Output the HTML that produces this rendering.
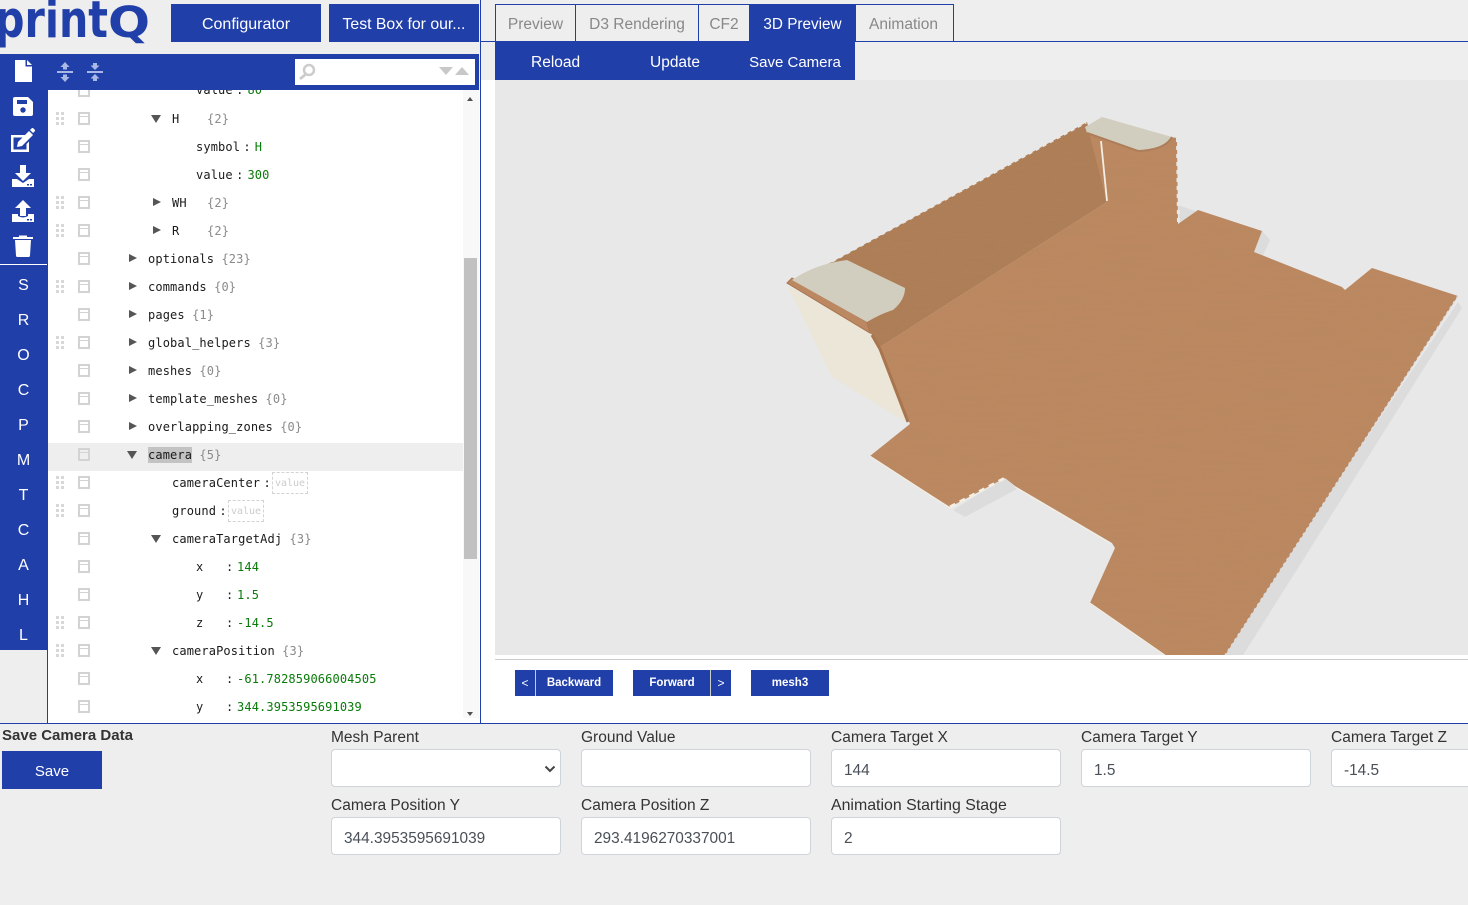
<!DOCTYPE html>
<html><head><meta charset="utf-8"><title>printQ</title>
<style>
html,body{margin:0;padding:0;width:1468px;height:905px;overflow:hidden;background:#eee}
body{position:relative;font-family:"Liberation Sans",sans-serif;color:#333}
div,span,svg{box-sizing:border-box}
.b{position:absolute;background:#213fa9;color:#fff;text-align:center;font-size:15.5px;white-space:nowrap}
.tab{position:absolute;top:4px;height:37px;line-height:40px;text-align:center;font-size:15.500px;color:#888;border:1px solid #213fa9;border-bottom:0}
.t{position:absolute;font:12px/16px "DejaVu Sans Mono",monospace;letter-spacing:.12px;color:#1a1a1a;white-space:pre}
.g{color:#8a8a8a}.v{color:#0a7a0a}
.c{position:relative;left:-4px}
.ck{position:absolute;left:78px;width:12px;height:13px;border:2px solid #d3d3d3}
.ck:after{content:"";position:absolute;left:0;right:0;top:2px;height:1px;background:#d3d3d3}
.dr{position:absolute;left:56px;width:8px;height:13px;background:
linear-gradient(#d8d8d8,#d8d8d8) 0 0/3px 3px no-repeat,
linear-gradient(#d8d8d8,#d8d8d8) 5px 0/3px 3px no-repeat,
linear-gradient(#d8d8d8,#d8d8d8) 0 5px/3px 3px no-repeat,
linear-gradient(#d8d8d8,#d8d8d8) 5px 5px/3px 3px no-repeat,
linear-gradient(#d8d8d8,#d8d8d8) 0 10px/3px 3px no-repeat,
linear-gradient(#d8d8d8,#d8d8d8) 5px 10px/3px 3px no-repeat}
.ar{position:absolute;width:0;height:0}
.ard{border-left:5px solid transparent;border-right:5px solid transparent;border-top:8px solid #555}
.arr{border-top:4.500px solid transparent;border-bottom:4.500px solid transparent;border-left:8px solid #555}
.side{position:absolute;left:0;width:47px;text-align:center;color:#fff;font-size:16px;line-height:20px}
.lbl{position:absolute;font-size:15.500px;line-height:20px;color:#333;white-space:nowrap}
.inp{position:absolute;width:230px;height:38px;background:#fff;border:1px solid #ced4da;border-radius:4px;font-size:15.400px;line-height:41px;padding-left:12px;color:#495057}
.vb{position:absolute;height:22px;width:36px;border:1px dashed #d3d3d3;font:10px/21px "DejaVu Sans Mono",monospace;color:#ccc;text-align:center}
.sb{position:absolute;top:670px;height:26px;background:#213fa9;color:#fff;font:bold 11.500px/27px "Liberation Sans",sans-serif;text-align:center}
</style></head><body>

<!-- logo -->
<svg style="position:absolute;left:0;top:0" width="165" height="54" fill="#213fa9" font-family="DejaVu Sans" font-weight="bold"><text x="-5" y="37" font-size="51" textLength="113" lengthAdjust="spacingAndGlyphs">print</text><text x="108" y="37" font-size="43" textLength="42" lengthAdjust="spacingAndGlyphs">Q</text></svg>

<div class="b" style="left:171px;top:4px;width:150px;height:38px;line-height:41px;font-size:16px">Configurator</div>
<div class="b" style="left:329px;top:4px;width:150px;height:38px;line-height:41px;font-size:15.800px">Test Box for our...</div>

<!-- left panel -->
<div style="position:absolute;left:0;top:54px;width:479px;height:36px;background:#213fa9"></div>
<div style="position:absolute;left:0;top:54px;width:48px;height:596px;background:#213fa9"></div>
<div style="position:absolute;left:0;top:264px;width:47px;height:1px;background:#fff"></div>
<div style="position:absolute;left:47px;top:650px;width:1px;height:73px;background:#213fa9"></div>
<div style="position:absolute;left:48px;top:90px;width:432px;height:633px;background:#fff;overflow:hidden"></div>
<div style="position:absolute;left:480px;top:0;width:1px;height:724px;background:#213fa9"></div>

<!-- toolbar icons -->
<svg style="position:absolute;left:0;top:54px" width="120" height="36" fill="#fff">
<path d="M15 6h10.500v6.500H32V28H15z"/><path d="M27 6l5 5h-5z"/>
<g fill="#a9b8e4"><rect x="57" y="17" width="16" height="2"/><path d="M65 8l4.500 5h-2.500v2.500h-4V13h-2.500zM65 28l4.500-5h-2.500v-2.500h-4V23h-2.500z"/><rect x="87" y="17" width="16" height="2"/><path d="M95 16l4.500-4.500h-2.500V9h-4v2.500h-2.500zM95 20l4.500 4.500h-2.500V27h-4v-2.500h-2.500z"/></g>
</svg>
<svg style="position:absolute;left:0;top:90px" width="48" height="175" fill="#fff">
<path d="M15 7h13l5 5v12a2 2 0 0 1-2 2H15a2 2 0 0 1-2-2V9a2 2 0 0 1 2-2z"/><rect x="17" y="10" width="10" height="4" fill="#213fa9"/><circle cx="23" cy="20" r="2.700" fill="#213fa9"/>
<path d="M11 45h16l-2.500 2.500H13.500v12h13V54l2.500-2.500V62H11z"/><path d="M18 52l11-11 4 4-11 11-5 1zM30 40l2-2h1l2 2v1l-2 2z"/>
<path d="M20 75h6v8h5l-8 8-8-8h5z"/><path d="M12 89h5l6 4 6-4h5v8H12z"/><rect x="27" y="94" width="2" height="1.500" fill="#213fa9"/><rect x="30" y="94" width="2" height="1.500" fill="#213fa9"/>
<path d="M23 110l8 8h-5v8h-6v-8h-5z"/><path d="M12 124h6v2q5 3 10 0v-2h6v8H12z"/><rect x="27" y="129" width="2" height="1.500" fill="#213fa9"/><rect x="30" y="129" width="2" height="1.500" fill="#213fa9"/>
<path d="M13 147h20v2H13zM19 145.500h8v2h-8zM15 150h16l-1 15.500a1.500 1.500 0 0 1-1.500 1.500h-11a1.500 1.500 0 0 1-1.500-1.500z"/>
</svg>
<div class="side" style="top:276px">S</div><div class="side" style="top:311px">R</div><div class="side" style="top:346px">O</div><div class="side" style="top:381px">C</div><div class="side" style="top:416px">P</div><div class="side" style="top:451px">M</div><div class="side" style="top:486px">T</div><div class="side" style="top:521px">C</div><div class="side" style="top:556px">A</div><div class="side" style="top:591px">H</div><div class="side" style="top:626px">L</div>

<!-- search -->
<div style="position:absolute;left:295px;top:59px;width:180px;height:26px;background:#fff"></div>
<svg style="position:absolute;left:295px;top:59px" width="180" height="26" fill="#ccc"><circle cx="14" cy="11" r="5" fill="none" stroke="#ccc" stroke-width="2.500"/><path d="M10 14l2 2-6 5-2-2z"/><path d="M144 8h14l-7 8zM160 16h14l-7-8z" fill="#c8c8c8"/></svg>

<!-- scrollbar -->
<div style="position:absolute;left:463px;top:90px;width:16px;height:628px;background:#f8f8f8"></div>
<div style="position:absolute;left:464px;top:258px;width:13px;height:301px;background:#c1c1c1"></div>
<div class="ar" style="left:467px;top:97px;border-left:3.500px solid transparent;border-right:3.500px solid transparent;border-bottom:4px solid #505050"></div>
<div class="ar" style="left:467px;top:712px;border-left:3.500px solid transparent;border-right:3.500px solid transparent;border-top:4px solid #505050"></div>

<!-- highlight -->
<div style="position:absolute;left:48px;top:443px;width:415px;height:28px;background:#eee"></div>
<div style="position:absolute;left:148px;top:447px;width:44px;height:16px;background:#c3c3c3"></div>

<!-- check icons -->
<div style="position:absolute;left:78px;top:90px;width:12px;height:7px;border:2px solid #d3d3d3;border-top:0"></div>
<div class="ck" style="top:112px"></div><div class="ck" style="top:140px"></div><div class="ck" style="top:168px"></div><div class="ck" style="top:196px"></div><div class="ck" style="top:224px"></div><div class="ck" style="top:252px"></div><div class="ck" style="top:280px"></div><div class="ck" style="top:308px"></div><div class="ck" style="top:336px"></div><div class="ck" style="top:364px"></div><div class="ck" style="top:392px"></div><div class="ck" style="top:420px"></div><div class="ck" style="top:448px"></div><div class="ck" style="top:476px"></div><div class="ck" style="top:504px"></div><div class="ck" style="top:532px"></div><div class="ck" style="top:560px"></div><div class="ck" style="top:588px"></div><div class="ck" style="top:616px"></div><div class="ck" style="top:644px"></div><div class="ck" style="top:672px"></div><div class="ck" style="top:700px"></div>
<div class="dr" style="top:112px"></div><div class="dr" style="top:196px"></div><div class="dr" style="top:224px"></div><div class="dr" style="top:280px"></div><div class="dr" style="top:336px"></div><div class="dr" style="top:476px"></div><div class="dr" style="top:504px"></div><div class="dr" style="top:616px"></div><div class="dr" style="top:644px"></div>

<!-- arrows -->
<div class="ar ard" style="left:151px;top:115px"></div>
<div class="ar arr" style="left:153px;top:198px"></div><div class="ar arr" style="left:153px;top:226px"></div>
<div class="ar arr" style="left:129px;top:254px"></div><div class="ar arr" style="left:129px;top:282px"></div><div class="ar arr" style="left:129px;top:310px"></div><div class="ar arr" style="left:129px;top:338px"></div><div class="ar arr" style="left:129px;top:366px"></div><div class="ar arr" style="left:129px;top:394px"></div><div class="ar arr" style="left:129px;top:422px"></div>
<div class="ar ard" style="left:127px;top:451px"></div><div class="ar ard" style="left:151px;top:535px"></div><div class="ar ard" style="left:151px;top:647px"></div>

<!-- tree text -->
<div style="position:absolute;left:48px;top:90px;width:415px;height:628px;overflow:hidden">
<div class="t" style="left:148px;top:-8px">value <span class="c">:</span><span class="v">80</span></div>
</div>
<div class="t" style="left:172px;top:111px">H</div><div class="t g" style="left:207px;top:111px">{2}</div>
<div class="t" style="left:196px;top:139px">symbol <span class="c">:</span><span class="v">H</span></div>
<div class="t" style="left:196px;top:167px">value <span class="c">:</span><span class="v">300</span></div>
<div class="t" style="left:172px;top:195px">WH</div><div class="t g" style="left:207px;top:195px">{2}</div>
<div class="t" style="left:172px;top:223px">R</div><div class="t g" style="left:207px;top:223px">{2}</div>
<div class="t" style="left:148px;top:251px">optionals <span class="g">{23}</span></div>
<div class="t" style="left:148px;top:279px">commands <span class="g">{0}</span></div>
<div class="t" style="left:148px;top:307px">pages <span class="g">{1}</span></div>
<div class="t" style="left:148px;top:335px">global_helpers <span class="g">{3}</span></div>
<div class="t" style="left:148px;top:363px">meshes <span class="g">{0}</span></div>
<div class="t" style="left:148px;top:391px">template_meshes <span class="g">{0}</span></div>
<div class="t" style="left:148px;top:419px">overlapping_zones <span class="g">{0}</span></div>
<div class="t" style="left:148px;top:447px">camera <span class="g">{5}</span></div>
<div class="t" style="left:172px;top:475px">cameraCenter <span class="c">:</span></div><div class="vb" style="left:272px;top:472px">value</div>
<div class="t" style="left:172px;top:503px">ground <span class="c">:</span></div><div class="vb" style="left:228px;top:500px">value</div>
<div class="t" style="left:172px;top:531px">cameraTargetAdj <span class="g">{3}</span></div>
<div class="t" style="left:196px;top:559px">x</div><div class="t" style="left:226px;top:559px">:</div><div class="t v" style="left:237px;top:559px">144</div>
<div class="t" style="left:196px;top:587px">y</div><div class="t" style="left:226px;top:587px">:</div><div class="t v" style="left:237px;top:587px">1.5</div>
<div class="t" style="left:196px;top:615px">z</div><div class="t" style="left:226px;top:615px">:</div><div class="t v" style="left:237px;top:615px">-14.5</div>
<div class="t" style="left:172px;top:643px">cameraPosition <span class="g">{3}</span></div>
<div class="t" style="left:196px;top:671px">x</div><div class="t" style="left:226px;top:671px">:</div><div class="t v" style="left:237px;top:671px">-61.782859066004505</div>
<div class="t" style="left:196px;top:699px">y</div><div class="t" style="left:226px;top:699px">:</div><div class="t v" style="left:237px;top:699px">344.3953595691039</div>

<!-- tabs -->
<div style="position:absolute;left:480px;top:41px;width:988px;height:1px;background:#213fa9"></div>
<div class="tab" style="left:495px;width:81px">Preview</div>
<div class="tab" style="left:575px;width:124px">D3 Rendering</div>
<div class="tab" style="left:698px;width:52px">CF2</div>
<div class="tab" style="left:853px;width:101px">Animation</div>
<div class="b" style="left:749px;top:4px;width:107px;height:38px;line-height:41px;font-size:15.300px">3D Preview</div>

<div style="position:absolute;left:495px;top:42px;width:360px;height:38px;background:#213fa9"></div>
<div class="b" style="left:531px;top:42px;width:48px;height:38px;line-height:41px;background:none">Reload</div>
<div class="b" style="left:649px;top:42px;width:52px;height:38px;line-height:41px;background:none">Update</div>
<div class="b" style="left:749px;top:42px;width:92px;height:38px;line-height:41px;background:none;font-size:15px">Save Camera</div>

<div style="position:absolute;left:481px;top:80px;width:987px;height:644px;background:#fff"></div>

<!-- 3D viewer -->
<svg style="position:absolute;left:495px;top:80px" width="973" height="580" viewBox="495 80 973 580">
<defs>
<filter id="n" x="0" y="0" width="100%" height="100%"><feTurbulence type="fractalNoise" baseFrequency="0.02 0.35" numOctaves="2" seed="4"/><feColorMatrix values="0 0 0 0 0.45  0 0 0 0 0.25  0 0 0 0 0.1  0 0 0 0.35 -0.1"/><feComposite in2="SourceGraphic" operator="in"/><feMerge><feMergeNode in="SourceGraphic"/><feMergeNode/></feMerge></filter>
<clipPath id="c"><rect x="495" y="80" width="973" height="575"/></clipPath>
</defs>
<rect x="495" y="80" width="973" height="575" fill="#e8e8e8"/>
<rect x="495" y="659" width="973" height="1" fill="#ccc"/>
<g clip-path="url(#c)">
<!-- shadows -->
<path d="M1458 302L1462 308 1240 660H1218zM1178 205L1198 212 1180 226zM1262 231L1270 240 1262 258 1254 252zM953 510L965 517 1017 489 1005 478z" fill="#dcdcdc"/>
<!-- cream outer wall -->
<path d="M787 285L870 332 880 350 908 423 832 377z" fill="#ebe6d8"/>
<!-- back wall -->
<path d="M800 276L832 262 1087 122 1107 202 880 347 870 332z" fill="#ad7e59" filter="url(#n)"/>
<line x1="832" y1="261" x2="1086" y2="122" stroke="#e8e8e8" stroke-width="3" stroke-dasharray="4 4"/>
<!-- floor + right panel -->
<path d="M1087 125L1177 138 1178 224 1198 210 1262 231 1254 252 1342 287 1345 290 1372 268 1458 296 1222 660H1172L1090 603 1115 548 1112 543 1015 486 1005 478 950 507 870 456 910 424 880 347 1107 202z" fill="#bb8862" filter="url(#n)"/>
<line x1="1177.500" y1="138" x2="1178.500" y2="224" stroke="#e8e8e8" stroke-width="3" stroke-dasharray="4 4"/>
<line x1="950" y1="507" x2="1005" y2="478" stroke="#f4efe2" stroke-width="3" stroke-dasharray="6 5"/>
<line x1="1458" y1="296" x2="1222" y2="660" stroke="#dcdcdc" stroke-width="1.500" stroke-dasharray="3 3"/>
<path d="M870 456L950 508M1090 603L1172 660M1015 487L1110 543" stroke="#f4efe2" stroke-width="1" fill="none"/>
<line x1="1101" y1="141" x2="1107" y2="201" stroke="#f2eee4" stroke-width="1.800"/>
<!-- inner edge -->
<path d="M872 335L880 349 908 422" stroke="#a8754f" stroke-width="3" fill="none"/>
<path d="M787 283L792 278 867 322 870 333z" fill="#bb8862" stroke="#a8754f" stroke-width="1"/>
<!-- caps -->
<path d="M792 280Q815 264 847 260L905 288Q905 300 893 310Q880 314 867 322z" fill="#d2cebf"/>
<path d="M1085 127L1102 117 1172 137Q1165 150 1138 150L1087 133z" fill="#d2cebf"/>
<path d="M1087 133L1138 151Q1165 150 1172 137" stroke="#ad7e59" stroke-width="2" fill="none"/>
</g>
</svg>

<!-- viewer nav -->
<div class="sb" style="left:515px;width:98px;padding-left:20px">Backward</div>
<div style="position:absolute;left:515px;top:670px;width:21px;height:26px;color:#fff;font:12px/26px 'Liberation Sans',sans-serif;text-align:center;border-right:1px solid #ccc">&lt;</div>
<div class="sb" style="left:633px;width:98px;padding-right:20px">Forward</div>
<div style="position:absolute;left:710px;top:670px;width:21px;height:26px;color:#fff;font:12px/26px 'Liberation Sans',sans-serif;text-align:center;border-left:1px solid #ccc">&gt;</div>
<div class="sb" style="left:751px;width:78px">mesh3</div>

<!-- bottom form -->
<div style="position:absolute;left:0;top:723px;width:1468px;height:1px;background:#213fa9"></div>
<div style="position:absolute;left:0;top:724px;width:1468px;height:181px;background:#eee"></div>
<div class="lbl" style="left:2px;top:726px;font-weight:bold;color:#333;font-size:15px">Save Camera Data</div>
<div class="b" style="left:2px;top:751px;width:100px;height:38px;line-height:41px;font-size:15px">Save</div>

<div class="lbl" style="left:331px;top:728px">Mesh Parent</div>
<div class="lbl" style="left:581px;top:728px">Ground Value</div>
<div class="lbl" style="left:831px;top:728px">Camera Target X</div>
<div class="lbl" style="left:1081px;top:728px">Camera Target Y</div>
<div class="lbl" style="left:1331px;top:728px">Camera Target Z</div>
<div class="inp" style="left:331px;top:749px"><svg style="position:absolute;right:4px;top:15px" width="12" height="8"><path d="M1.500 1.500L6 6l4.500-4.500" fill="none" stroke="#444" stroke-width="2"/></svg></div>
<div class="inp" style="left:581px;top:749px"></div>
<div class="inp" style="left:831px;top:749px">144</div>
<div class="inp" style="left:1081px;top:749px">1.5</div>
<div class="inp" style="left:1331px;top:749px">-14.5</div>
<div class="lbl" style="left:331px;top:796px">Camera Position Y</div>
<div class="lbl" style="left:581px;top:796px">Camera Position Z</div>
<div class="lbl" style="left:831px;top:796px;font-size:15.900px">Animation Starting Stage</div>
<div class="inp" style="left:331px;top:817px">344.3953595691039</div>
<div class="inp" style="left:581px;top:817px">293.4196270337001</div>
<div class="inp" style="left:831px;top:817px">2</div>
</body></html>
